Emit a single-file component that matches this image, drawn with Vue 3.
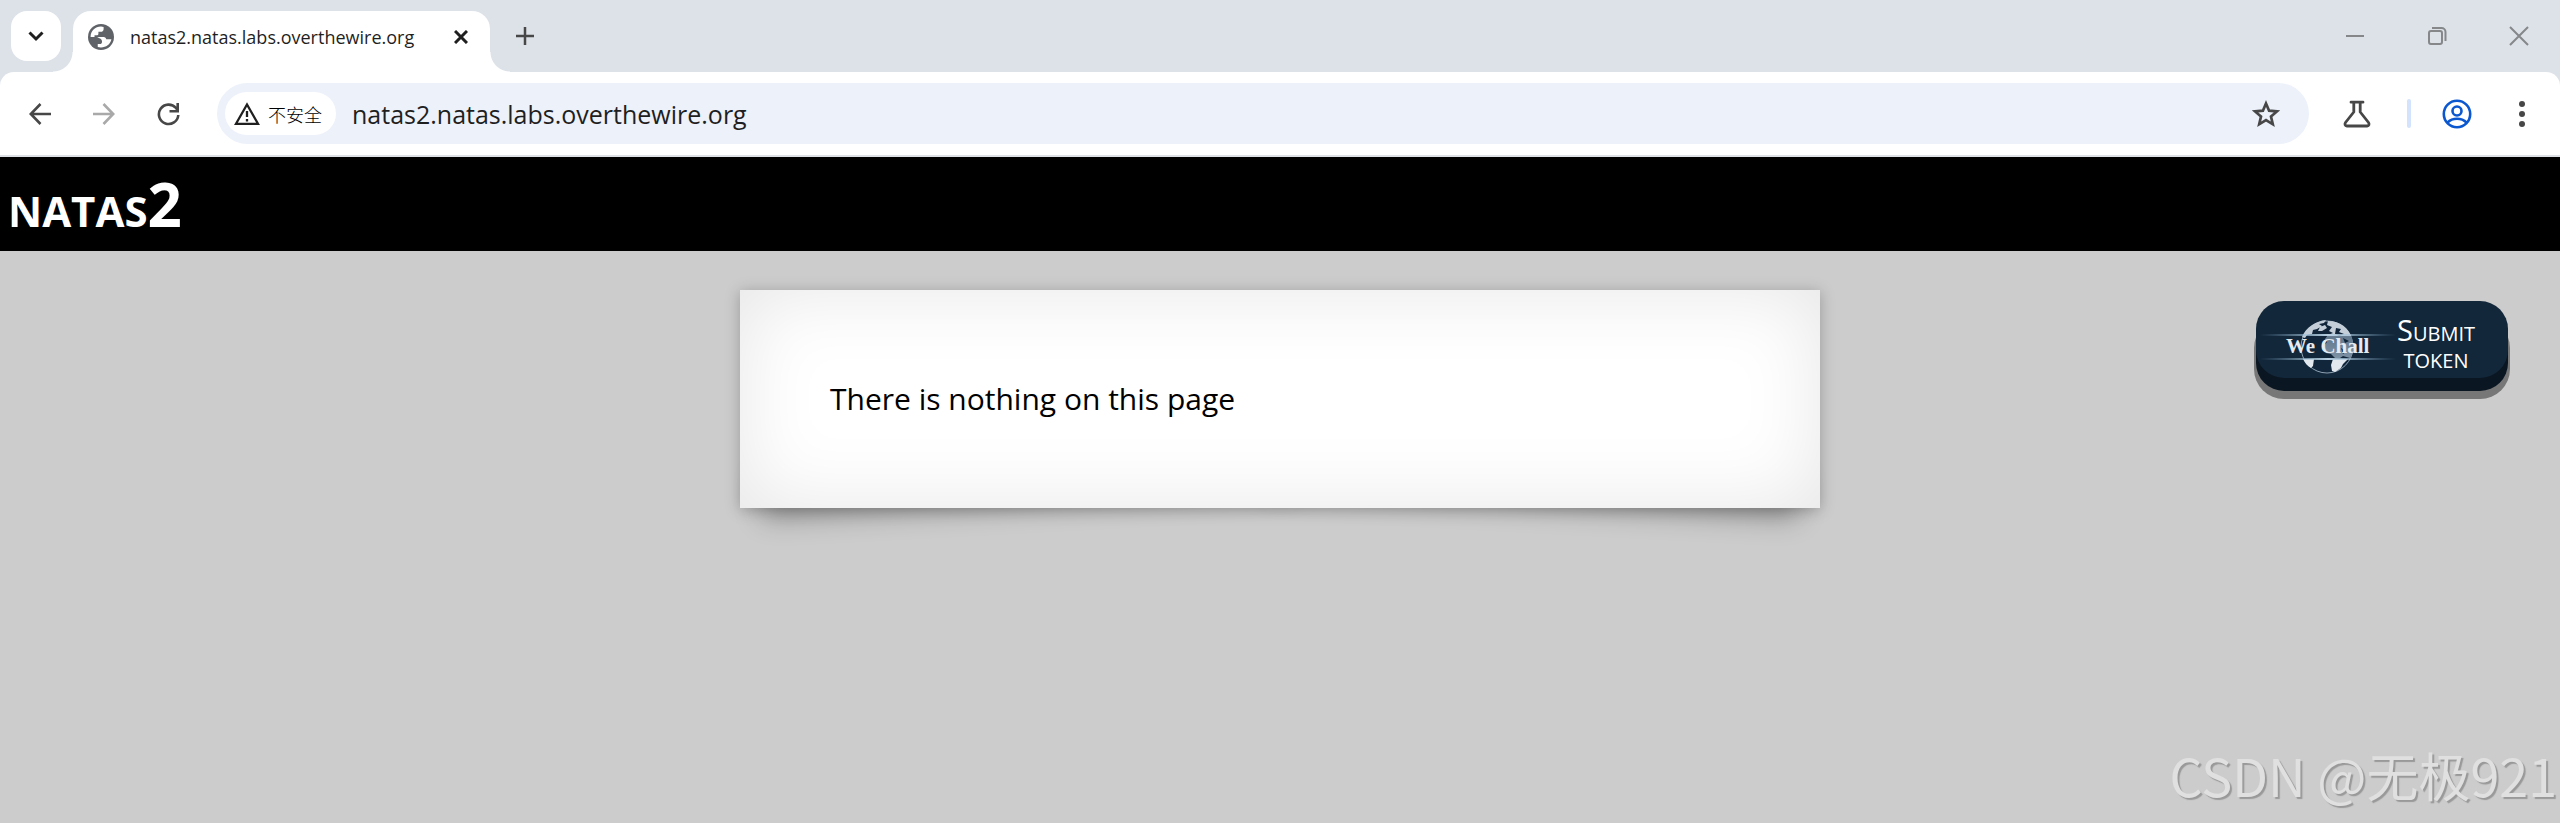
<template>
  <div class="window">
    <div class="tab-strip">
      <button class="tab-search" aria-label="Search tabs">
        <svg width="16" height="16" viewBox="0 0 16 16" fill="none" stroke="#1f1f1f" stroke-width="3">
          <path d="M1.500 4.500 8 11l6.500-6.500" />
        </svg>
      </button>
      <div class="tab">
        <svg class="favicon" width="26" height="26" viewBox="2 2 20 20">
          <circle cx="12" cy="12" r="10" fill="#5f6368" />
          <path fill="#fff" d="M4 12C4 7.500 7.500 4 12 4l2 .300V6c0 1.100-.9 2-2 2h-2v1.500c0 .8-.6 1.200-1.500 1.200H7V12zM9.500 19.600v-2.200h1.500c1.200 0 1.800-.8 1.800-1.800 0-1.500-.8-2.300-2-2.700L9 12h5c1.200 0 2 .8 2 1.800h4C19 18 16 20 12 20z" />
        </svg>
        <span class="tab-title">{{ host }}</span>
        <button class="tab-close" aria-label="Close tab">
          <svg width="14" height="14" viewBox="0 0 14 14" stroke="#1f1f1f" stroke-width="3">
            <path d="M1 1l12 12M13 1 1 13" />
          </svg>
        </button>
      </div>
      <button class="new-tab" aria-label="New tab">
        <svg width="18" height="18" viewBox="0 0 18 18" stroke="#474747" stroke-width="2.500">
          <path d="M9 0v18M0 9h18" />
        </svg>
      </button>
      <div class="window-controls">
        <button aria-label="Minimize">
          <svg width="20" height="20" viewBox="0 0 20 20" stroke="#858789" stroke-width="2"><path d="M1 10h18" /></svg>
        </button>
        <button aria-label="Restore">
          <svg width="20" height="20" viewBox="0 0 20 20" fill="none" stroke="#858789" stroke-width="2">
            <rect x="2" y="5" width="13" height="13" rx="2" />
            <path d="M5 2h9.500a4 4 0 0 1 4 4v9" />
          </svg>
        </button>
        <button aria-label="Close window">
          <svg width="20" height="20" viewBox="0 0 20 20" stroke="#858789" stroke-width="2"><path d="M1 1l18 18M19 1 1 19" /></svg>
        </button>
      </div>
    </div>

    <div class="toolbar">
      <button class="nav" aria-label="Back">
        <svg width="22" height="22" viewBox="0 0 22 22" fill="none" stroke="#474747" stroke-width="2.600"><path d="M22 11H2M11.500 1 1.800 11l9.700 10" /></svg>
      </button>
      <button class="nav" aria-label="Forward" disabled>
        <svg width="22" height="22" viewBox="0 0 22 22" fill="none" stroke="#a9a9a9" stroke-width="2.600"><path d="M0 11h20M10.500 1l9.700 10-9.700 10" /></svg>
      </button>
      <button class="nav" aria-label="Reload">
        <svg width="24" height="24" viewBox="0 0 24 24" fill="none" stroke="#474747" stroke-width="2.600"><path d="M22.300 13A9.700 9.700 0 1 1 20 6l1.500 2M21.700 1v8.200H13.500" /></svg>
      </button>
      <div class="omnibox">
        <button class="site-info">
          <svg width="26" height="24" viewBox="0 0 26 24" fill="none" stroke="#1f1f1f" stroke-width="2.300">
            <path d="M13 2.500 2 21.800h22zM13 9v6M13 17v2.500" />
          </svg>
          <span>不安全</span>
        </button>
        <input class="url" type="text" aria-label="Address" :value="host" />
        <button class="bookmark" aria-label="Bookmark this page">
          <svg width="28" height="28" viewBox="0 0 28 28" fill="none" stroke="#474747" stroke-width="2.700">
            <path d="M14 3.500l3.100 7.200 7.900.7-6 5.200 1.800 7.700-6.800-4.100-6.800 4.100L9 16.600l-6-5.200 7.900-.7z" />
          </svg>
        </button>
      </div>
      <button class="labs" aria-label="Labs">
        <svg width="28" height="28" viewBox="0 0 28 28" fill="none" stroke="#474747" stroke-width="2.800" stroke-linejoin="round" stroke-linecap="round">
          <path d="M8 2.200h12M10.800 2.500V12L2.500 22.500c-1 1.500-.5 3.500 1.300 3.500h20.400c1.800 0 2.300-2 1.300-3.500L17.200 12V2.500" />
        </svg>
      </button>
      <span class="divider"></span>
      <button class="profile" aria-label="Profile">
        <svg width="30" height="30" viewBox="0 0 30 30" fill="none" stroke="#0b57d0" stroke-width="2.600">
          <circle cx="15" cy="15" r="13.200" />
          <circle cx="15" cy="12" r="4.500" />
          <path d="M5.500 23.500c5-5 14-5 19 0" />
        </svg>
      </button>
      <button class="menu" aria-label="Menu">
        <svg width="6" height="26" viewBox="0 0 6 26" fill="#474747">
          <circle cx="3" cy="3" r="3" /><circle cx="3" cy="13" r="3" /><circle cx="3" cy="23" r="3" />
        </svg>
      </button>
    </div>

    <main class="page">
      <h1>natas2</h1>
      <div class="content">There is nothing on this page</div>
      <a class="wechall" href="#">
        <svg class="logo" width="136" height="56" viewBox="0 0 136 56">
          <defs>
            <linearGradient id="beam">
              <stop offset="0" stop-color="#7fa6c4" stop-opacity="0" />
              <stop offset=".5" stop-color="#b8d0e2" />
              <stop offset="1" stop-color="#7fa6c4" stop-opacity="0" />
            </linearGradient>
            <linearGradient id="land" x2="0" y2="1">
              <stop offset="0" stop-color="#c3ced9" />
              <stop offset=".4" stop-color="#c3ced9" />
              <stop offset=".42" stop-color="#62788d" />
              <stop offset="1" stop-color="#7d91a4" />
            </linearGradient>
          </defs>
          <circle cx="67" cy="28" r="26" fill="#11263a" stroke="#8fa2b3" />
          <path fill="#c3ced9" d="M42 18C46 8 56 2 66 1l-2 3-5 1 3 2-5 3-4 1-1 4-5 1-2 3zM60 8l5-2 2 3-5 3-4 0z" />
          <path fill="url(#land)" d="M68 2c12 0 21 7 24 17l2 8c0 6-2 9-4 12l-7-2-3 2h-5l-4-4-5-1-3-6 4-5-2-3 3-4 5-2-4-2 3-4-5-2z" />
          <path fill="#11263a" d="M76 9l5 1-2 3 5 2-5 2-4-2zM83 19l6 3-4 2zM81 29l5 3-3 3z" />
          <path fill="#e2e8ee" d="M43 40h11l-1 7-2 2c-4-2-6-5-8-9zM73 40h15l-5 5-2 4-6 4-3-1-1-6z" />
          <rect y="15" width="136" height="2" fill="url(#beam)" />
          <rect y="39" width="136" height="2" fill="url(#beam)" />
          <text x="26" y="34">We Chall</text>
        </svg>
        <span class="token-label">Submit<br />token</span>
      </a>
      <div class="watermark">CSDN @无极921</div>
    </main>
  </div>
</template>

<script setup>
const host = 'natas2.natas.labs.overthewire.org'
</script>

<style>
body {
  margin: 0;
  background: #ccc;
}
</style>

<style scoped>
.window {
  display: flex;
  flex-direction: column;
  min-height: 100vh;
  background: #dde2e9;
  font-family: "Open Sans", "Noto Sans CJK SC", sans-serif;
  color: #1f1f1f;
}

button {
  display: flex;
  align-items: center;
  justify-content: center;
  flex: none;
  padding: 0;
  border: 0;
  background: none;
  font: inherit;
  color: inherit;
}

.tab-strip {
  display: flex;
  align-items: center;
  height: 72px;
  padding-left: 11px;
}

.tab-search {
  width: 50px;
  height: 50px;
  border-radius: 16px;
  background: #fff;
}

.tab {
  position: relative;
  display: flex;
  align-items: center;
  align-self: flex-end;
  box-sizing: border-box;
  width: 417px;
  height: 61px;
  margin-left: 12px;
  padding: 0 22px 10px 15px;
  border-radius: 18px 18px 0 0;
  background: #fff;
}

/* flared feet of the active tab */
.tab::before,
.tab::after {
  content: "";
  position: absolute;
  bottom: 0;
  width: 20px;
  height: 20px;
}

.tab::before {
  right: 100%;
  background: radial-gradient(circle at 0 0, transparent 19px, #fff 20px);
}

.tab::after {
  left: 100%;
  background: radial-gradient(circle at 100% 0, transparent 19px, #fff 20px);
}

.tab-title {
  flex: 1;
  margin-left: 16px;
  font-size: 18px;
  white-space: nowrap;
}

.new-tab {
  width: 50px;
  height: 50px;
  margin-left: 10px;
}

.window-controls {
  display: flex;
  margin-left: auto;
}

.window-controls button {
  width: 82px;
  height: 72px;
}

.toolbar {
  display: flex;
  align-items: center;
  height: 83px;
  padding: 0 8px;
  border-bottom: 2px solid #dee1e6;
  border-radius: 14px 14px 0 0;
  background: #fff;
}

.nav {
  width: 64px;
  height: 60px;
}

.omnibox {
  display: flex;
  flex: 1;
  align-items: center;
  height: 61px;
  margin-left: 17px;
  border-radius: 31px;
  background: #ecf1fa;
}

.site-info {
  gap: 8px;
  height: 43px;
  margin-left: 8px;
  padding: 0 14px 0 9px;
  border-radius: 22px;
  background: #fff;
  font-size: 18px;
  font-weight: 300;
  color: #000;
}

.url {
  flex: 1;
  min-width: 0;
  margin-left: 16px;
  padding: 0;
  border: 0;
  outline: 0;
  background: none;
  font: inherit;
  font-size: 25px;
  color: inherit;
}

.bookmark {
  width: 60px;
  height: 60px;
  margin-right: 13px;
}

.labs {
  width: 60px;
  height: 60px;
  margin-left: 18px;
}

.divider {
  width: 4px;
  height: 29px;
  margin-left: 20px;
  border-radius: 2px;
  background: #d3e3fd;
}

.profile {
  width: 60px;
  height: 60px;
  margin-left: 16px;
}

.menu {
  width: 60px;
  height: 60px;
  margin-left: 5px;
}

.page {
  position: relative;
  z-index: 0;
  flex: 1;
  background: #ccc;
  color: #000;
}

h1 {
  margin: 0;
  padding-left: 8px;
  background: #000;
  color: #fff;
  font-size: 60px;
  font-variant: small-caps;
  line-height: 94px;
}

.content {
  position: relative;
  width: 900px;
  margin: 39px auto 0;
  padding: 88px 90px;
  background: #fff;
  box-shadow: 0 2px 14px rgba(0, 0, 0, 0.25), 0 0 80px rgba(0, 0, 0, 0.1) inset;
  font-size: 30px;
  line-height: 42px;
}

/* lifted corners */
.content::before,
.content::after {
  content: "";
  position: absolute;
  z-index: -1;
  bottom: 30px;
  width: 50%;
  height: 20%;
  box-shadow: 0 26px 28px rgba(0, 0, 0, 0.32);
}

.content::before {
  left: 20px;
  transform: rotate(-3deg);
}

.content::after {
  right: 20px;
  transform: rotate(3deg);
}

.wechall {
  position: absolute;
  top: 144px;
  right: 52px;
  display: flex;
  align-items: center;
  box-sizing: border-box;
  width: 252px;
  height: 77px;
  padding: 14px 0 0 4px;
  border-radius: 28px;
  background: #12273a;
  box-shadow: 0 13px 0 #0a1621, 0 19px 0 2px #777;
  color: #fff;
  text-decoration: none;
}

.logo {
  flex: none;
}

.logo text {
  fill: #e4ebf2;
  font: bold 21px "Liberation Serif", serif;
}

.token-label {
  flex: 1;
  padding: 0 32px 8px 0;
  font-size: 29px;
  font-variant: small-caps;
  line-height: 27px;
  text-align: center;
}

.watermark {
  position: absolute;
  right: 3px;
  bottom: 10px;
  color: #e0e0e0;
  font-family: "Noto Sans CJK SC", sans-serif;
  font-size: 52px;
  font-weight: 400;
  line-height: 76px;
  text-shadow: 2px 2px 1px #999;
}
</style>
